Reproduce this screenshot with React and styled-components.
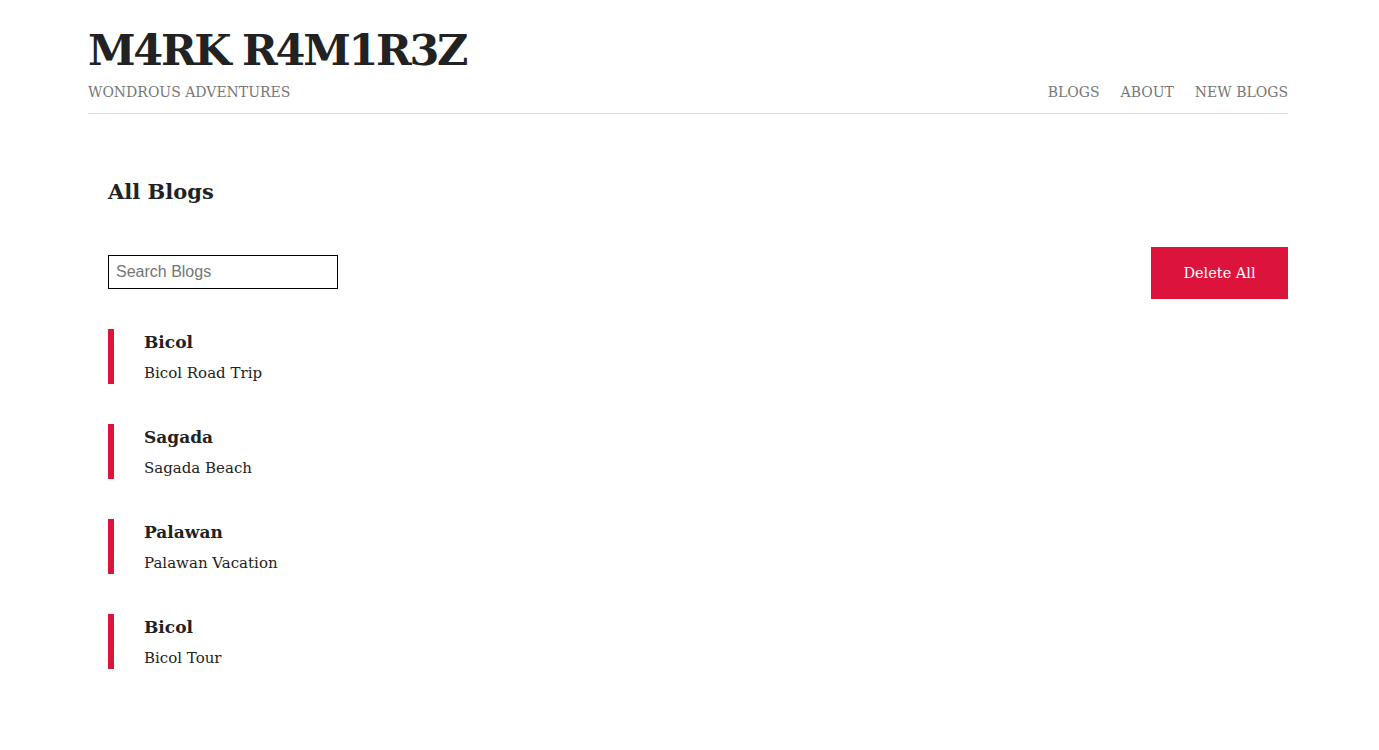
import React from 'react';
import styled, { createGlobalStyle } from 'styled-components';

const Global = createGlobalStyle`
  body {
    margin: 0;
    background: #fff;
    color: #222;
    font-family: "DejaVu Serif", "Liberation Serif", serif;
  }
  * { box-sizing: border-box; }
`;

const Page = styled.div`
  width: 1200px;
  margin-left: max(0px, calc(50% - 601.5px));
`;

const Header = styled.header`
  padding-top: 22px;
  border-bottom: 1px solid #ddd;
  padding-bottom: 11px;
`;

const Title = styled.h1`
  margin: 0;
  font-size: 43px;
  line-height: 56px;
  font-weight: bold;
  color: #222;
  letter-spacing: -2.3px;
`;

const SubRow = styled.div`
  display: flex;
  justify-content: space-between;
  align-items: baseline;
  margin-top: 4px;
  color: #777;
  font-size: 14px;
  line-height: 20px;
`;

const Nav = styled.nav`
  display: flex;
  gap: 21px;
  a {
    color: #777;
    text-decoration: none;
  }
`;

const Main = styled.main`
  padding: 60px 0 0 20px;
`;

const Heading = styled.h2`
  margin: 0;
  font-size: 21px;
  line-height: 36px;
  font-weight: bold;
`;

const Toolbar = styled.div`
  display: flex;
  justify-content: space-between;
  align-items: flex-start;
  margin-top: 37px;
`;

const Search = styled.input`
  width: 230px;
  height: 34px;
  margin-top: 8px;
  border: 1px solid #000;
  padding: 0 7px;
  font-family: "Liberation Sans", Arial, sans-serif;
  font-size: 16px;
  color: #222;
  &::placeholder { color: #757575; }
`;

const DeleteButton = styled.button`
  width: 137px;
  height: 52px;
  border: none;
  background: #dc143c;
  color: #fff;
  font-family: "DejaVu Serif", serif;
  font-size: 14.5px;
  cursor: pointer;
`;

const List = styled.div`
  display: flex;
  flex-direction: column;
  gap: 40px;
  margin-top: 30px;
`;

const Item = styled.div`
  border-left: 6px solid #dc143c;
  height: 55px;
  padding-left: 30px;
`;

const ItemTitle = styled.h3`
  margin: 0;
  font-size: 17px;
  line-height: 26px;
  font-weight: bold;
`;

const ItemText = styled.p`
  margin: 8px 0 0;
  font-size: 15px;
  line-height: 20px;
`;

const blogs = [
  { title: 'Bicol', body: 'Bicol Road Trip' },
  { title: 'Sagada', body: 'Sagada Beach' },
  { title: 'Palawan', body: 'Palawan Vacation' },
  { title: 'Bicol', body: 'Bicol Tour' },
];

export default function App() {
  return (
    <>
      <Global />
      <Page>
        <Header>
          <Title>M4RK R4M1R3Z</Title>
          <SubRow>
            <span>WONDROUS ADVENTURES</span>
            <Nav>
              <a href="#">BLOGS</a>
              <a href="#">ABOUT</a>
              <a href="#">NEW BLOGS</a>
            </Nav>
          </SubRow>
        </Header>
        <Main>
          <Heading>All Blogs</Heading>
          <Toolbar>
            <Search placeholder="Search Blogs" />
            <DeleteButton>Delete All</DeleteButton>
          </Toolbar>
          <List>
            {blogs.map((b, i) => (
              <Item key={i}>
                <ItemTitle>{b.title}</ItemTitle>
                <ItemText>{b.body}</ItemText>
              </Item>
            ))}
          </List>
        </Main>
      </Page>
    </>
  );
}
